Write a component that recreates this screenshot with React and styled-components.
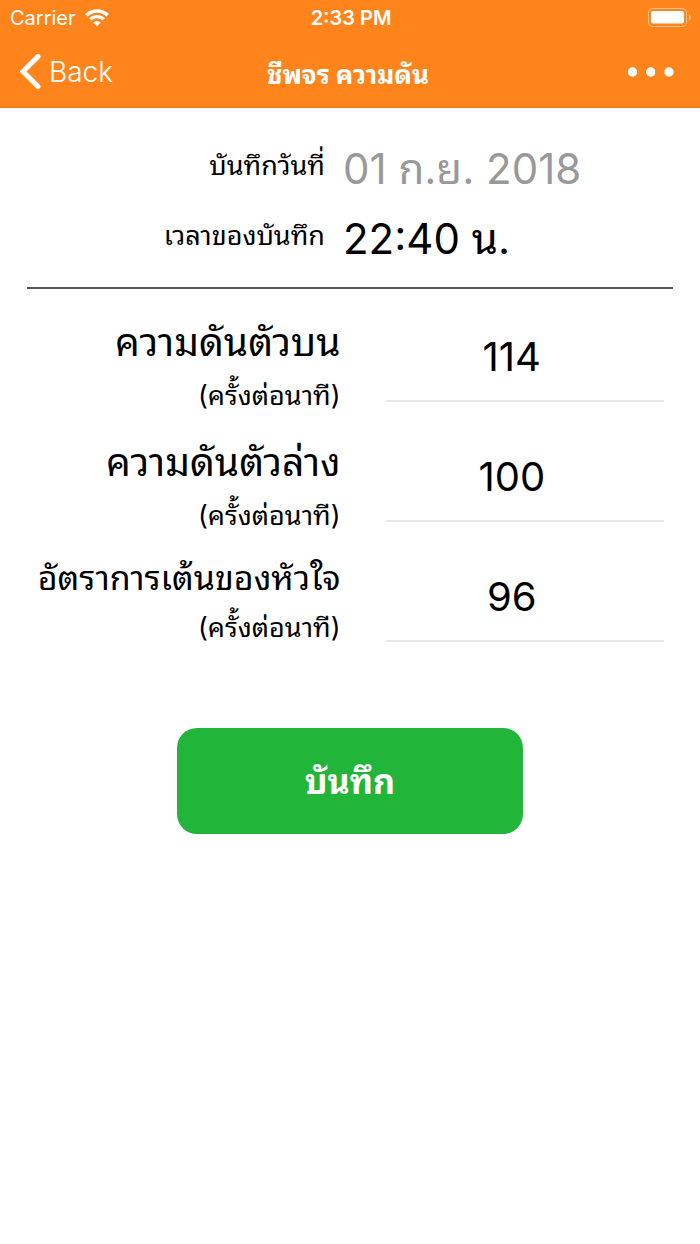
import React, { useState } from 'react';
import styled, { createGlobalStyle } from 'styled-components';

const GlobalStyle = createGlobalStyle`
  * {
    box-sizing: border-box;
  }
  body {
    margin: 0;
    background: #fff;
    color: #000;
    font-family: Inter, Thonburi, 'Noto Sans Thai Looped', Loma, Garuda, Waree, 'Noto Sans', sans-serif;
  }
  button,
  input {
    font-family: inherit;
  }
`;

const Header = styled.header`
  background: #ff841b;
  color: #fff;
  border-bottom: 1px solid #e87a1a;
`;

const StatusBar = styled.div`
  height: 36px;
  display: grid;
  grid-template-columns: 1fr auto 1fr;
  align-items: center;
  padding: 0 8px 0 10px;
  font-size: 20px;
`;

const Carrier = styled.div`
  display: flex;
  align-items: center;
  gap: 9px;
`;

const Clock = styled.div`
  font-weight: 600;
`;

const Battery = styled.div`
  display: flex;
  justify-content: flex-end;
`;

const NavBar = styled.nav`
  height: 71px;
  display: grid;
  grid-template-columns: 1fr auto 1fr;
  align-items: center;
  padding: 0 24px 0 20px;
`;

const BackLink = styled.a`
  display: flex;
  align-items: center;
  gap: 8px;
  color: #fff;
  font-size: 28px;
  font-weight: 300;
  line-height: 34px;
  text-decoration: none;
`;

const Title = styled.h1`
  margin: 0;
  font-size: 26px;
  font-weight: 700;
`;

const MoreButton = styled.button`
  justify-self: end;
  display: flex;
  padding: 0;
  border: 0;
  background: none;
  cursor: pointer;
`;

const Form = styled.form`
  padding: 22px 27px;
`;

const DateRow = styled.div`
  display: grid;
  grid-template-columns: 298fr 330fr;
  column-gap: 18px;
  align-items: center;
  height: 70px;
`;

const DateLabel = styled.label`
  padding-bottom: 6px;
  text-align: right;
  font-size: 27px;
`;

const DateInput = styled.input`
  width: 100%;
  padding: 0;
  border: 0;
  outline: 0;
  background: none;
  font-size: 42px;
  color: ${props => (props.$muted ? '#999' : '#000')};
`;

const Divider = styled.hr`
  margin: 17px 0 0;
  border: 0;
  border-top: 2px solid #555;
`;

const Measure = styled.div`
  display: grid;
  grid-template-columns: 313fr 278fr;
  column-gap: 45px;
  height: 120px;
  padding-right: 9px;
`;

const MeasureLabel = styled.label`
  display: flex;
  flex-direction: column;
  padding-top: 23px;
  text-align: right;
  font-size: ${props => (props.$small ? 34 : 39)}px;
  line-height: ${props => (props.$small ? 52 : 60)}px;
  white-space: nowrap;
`;

const Unit = styled.span`
  font-size: 27px;
  line-height: 48px;
`;

const MeasureInput = styled.input`
  width: 100%;
  height: 88px;
  margin-top: 25px;
  padding: 0 26px 2px 0;
  border: 0;
  border-bottom: 2px solid #e8e8e8;
  outline: 0;
  font-size: 40px;
  text-align: center;
`;

const SaveButton = styled.button`
  display: block;
  width: 346px;
  height: 106px;
  margin: 79px auto 0;
  padding: 0 0 6px;
  border: 0;
  border-radius: 20px;
  background: #21b53a;
  color: #fff;
  font-size: 34px;
  font-weight: 700;
  cursor: pointer;
`;

const MEASURES = [
  { id: 'systolic', label: 'ความดันตัวบน', value: '114' },
  { id: 'diastolic', label: 'ความดันตัวล่าง', value: '100' },
  { id: 'pulse', label: 'อัตราการเต้นของหัวใจ', value: '96', small: true },
];

export default function App() {
  const [time, setTime] = useState('22:40 น.');

  return (
    <>
      <GlobalStyle />
      <Header>
        <StatusBar>
          <Carrier>
            Carrier
            <svg width="24" height="20" viewBox="0 0 24 20" fill="none" stroke="#fff">
              <path d="M1.3 7.2a15.4 15.4 0 0 1 21.4 0" strokeWidth="3.5" />
              <path d="M5.2 11.4a9.8 9.8 0 0 1 13.6 0" strokeWidth="3.2" />
              <path d="M12 18.3l-3.8-3.7a5.4 5.4 0 0 1 7.6 0z" fill="#fff" stroke="none" />
            </svg>
          </Carrier>
          <Clock>2:33 PM</Clock>
          <Battery>
            <svg width="44" height="20" viewBox="0 0 44 20">
              <rect x="0.5" y="0.5" width="38" height="18" rx="4" fill="none" stroke="#fff" strokeOpacity="0.5" />
              <rect x="3" y="3" width="33" height="12.5" rx="2" fill="#fff" />
              <path d="M41 6q3.5 3.5 0 7z" fill="#fff" fillOpacity="0.6" />
            </svg>
          </Battery>
        </StatusBar>
        <NavBar>
          <BackLink href="#back">
            <svg
              width="21"
              height="36"
              viewBox="0 0 21 36"
              fill="none"
              stroke="#fff"
              strokeWidth="5"
              strokeLinecap="round"
            >
              <path d="M18 2.5L3 17.5l15 15" />
            </svg>
            Back
          </BackLink>
          <Title>ชีพจร ความดัน</Title>
          <MoreButton type="button" aria-label="More">
            <svg width="49" height="12" viewBox="0 0 49 12" fill="#fff">
              <circle cx="5.5" cy="6" r="4.7" />
              <circle cx="23.7" cy="6" r="4.7" />
              <circle cx="42" cy="6" r="4.7" />
            </svg>
          </MoreButton>
        </NavBar>
      </Header>

      <Form onSubmit={e => e.preventDefault()}>
        <DateRow>
          <DateLabel htmlFor="date">บันทึกวันที่</DateLabel>
          <DateInput id="date" $muted readOnly value="01 ก.ย. 2018" />
        </DateRow>
        <DateRow>
          <DateLabel htmlFor="time">เวลาของบันทึก</DateLabel>
          <DateInput id="time" value={time} onChange={e => setTime(e.target.value)} />
        </DateRow>
        <Divider />
        {MEASURES.map(item => (
          <Measure key={item.id}>
            <MeasureLabel htmlFor={item.id} $small={item.small}>
              {item.label}
              <Unit>(ครั้งต่อนาที)</Unit>
            </MeasureLabel>
            <MeasureInput id={item.id} defaultValue={item.value} />
          </Measure>
        ))}
        <SaveButton type="submit">บันทึก</SaveButton>
      </Form>
    </>
  );
}
